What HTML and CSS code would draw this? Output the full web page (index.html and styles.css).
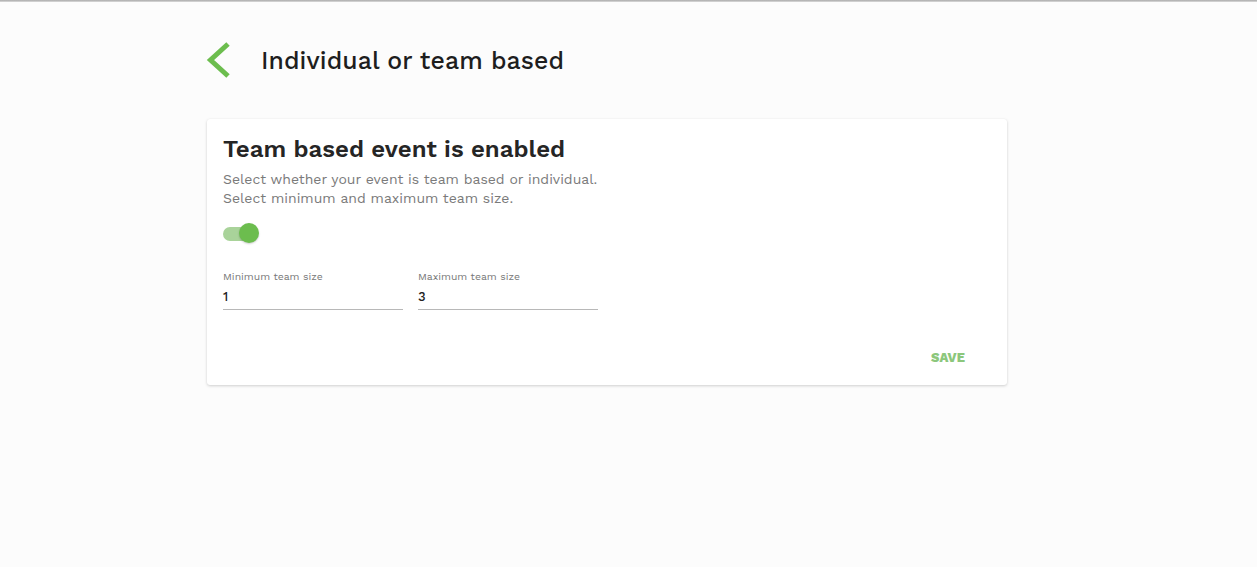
FILE: index.html
```html
<!DOCTYPE html>
<html>
<head>
<meta charset="utf-8">
<link rel="stylesheet" href="styles.css">
</head>
<body>
<div class="topline"></div>
<main class="page">
  <header class="header">
    <button class="back" aria-label="Back">
      <svg width="26" height="36" viewBox="0 0 26 36"><path d="M22 2 L4.5 18 L22 34" fill="none" stroke="#6cbd4e" stroke-width="5" stroke-linecap="butt" stroke-linejoin="miter"/></svg>
    </button>
    <h1 class="title">Individual or team based</h1>
  </header>
  <section class="card">
    <h2 class="card-title">Team based event is enabled</h2>
    <p class="card-desc">Select whether your event is team based or individual.<br>Select minimum and maximum team size.</p>
    <div class="toggle"><span class="track"></span><span class="thumb"></span></div>
    <div class="fields">
      <label class="field">
        <span class="field-label">Minimum team size</span>
        <span class="field-value">1</span>
      </label>
      <label class="field">
        <span class="field-label">Maximum team size</span>
        <span class="field-value">3</span>
      </label>
    </div>
    <div class="actions"><button class="save">SAVE</button></div>
  </section>
</main>
</body>
</html>
```

FILE: styles.css
```css
html, body {
  margin: 0;
  padding: 0;
  background: #fcfcfc;
  font-family: "Work Sans", Inter, "Noto Sans", sans-serif;
  height: 100%;
}
.topline {
  height: 2px;
  background: linear-gradient(#a9a9a9, #dcdcdc);
}
.page {
  width: 800px;
  margin-left: 207px;
}
.header {
  display: flex;
  align-items: center;
  height: 58px;
  margin-top: 30px;
}
.back {
  border: 0;
  background: none;
  padding: 0;
  width: 26px;
  height: 36px;
  margin-left: -1px;
  margin-top: -2px;
  display: flex;
}
.title {
  margin: -2px 0 0 29px;
  font-size: 24.8px;
  font-weight: 500;
  color: #1e1e1e;
  letter-spacing: 0.1px;
}
.card {
  margin-top: 29px;
  background: #fff;
  border-radius: 3px;
  box-shadow: 0 1px 3px rgba(0,0,0,0.18), 0 0 1px rgba(0,0,0,0.06);
  padding: 15px 16px 16px 16px;
  height: 235px;
}
.card-title {
  margin: 0;
  font-size: 24px;
  font-weight: 600;
  color: #252525;
  line-height: 30px;
}
.card-desc {
  margin: 6px 0 0 0;
  font-size: 14px;
  line-height: 19px;
  color: #7a7a7a;
}
.toggle {
  position: relative;
  width: 38px;
  height: 22px;
  margin-top: 15px;
}
.track {
  position: absolute;
  left: 0;
  top: 4px;
  width: 34px;
  height: 14px;
  border-radius: 7px;
  background: #a9d39a;
}
.thumb {
  position: absolute;
  left: 16px;
  top: 0;
  width: 20px;
  height: 20px;
  border-radius: 50%;
  background: #6cbd4e;
  box-shadow: 0 1px 2px rgba(0,0,0,0.2);
}
.fields {
  display: flex;
  gap: 15px;
  margin-top: 25px;
}
.field {
  width: 180px;
  display: flex;
  flex-direction: column;
  border-bottom: 1px solid #b8b8b8;
}
.field-label {
  font-size: 10.4px;
  color: #777;
  line-height: 14px;
}
.field-value {
  font-size: 13px;
  font-weight: 500;
  color: #222;
  line-height: 17px;
  margin-top: 4px;
  padding-bottom: 4px;
}
.actions {
  display: flex;
  justify-content: flex-end;
  margin-top: 36px;
}
.save {
  border: 0;
  background: none;
  font-family: inherit;
  font-size: 13px;
  font-weight: 800;
  color: #8cc77c;
  padding: 4px 26px 4px 8px;
  letter-spacing: 0.1px;
}
```
